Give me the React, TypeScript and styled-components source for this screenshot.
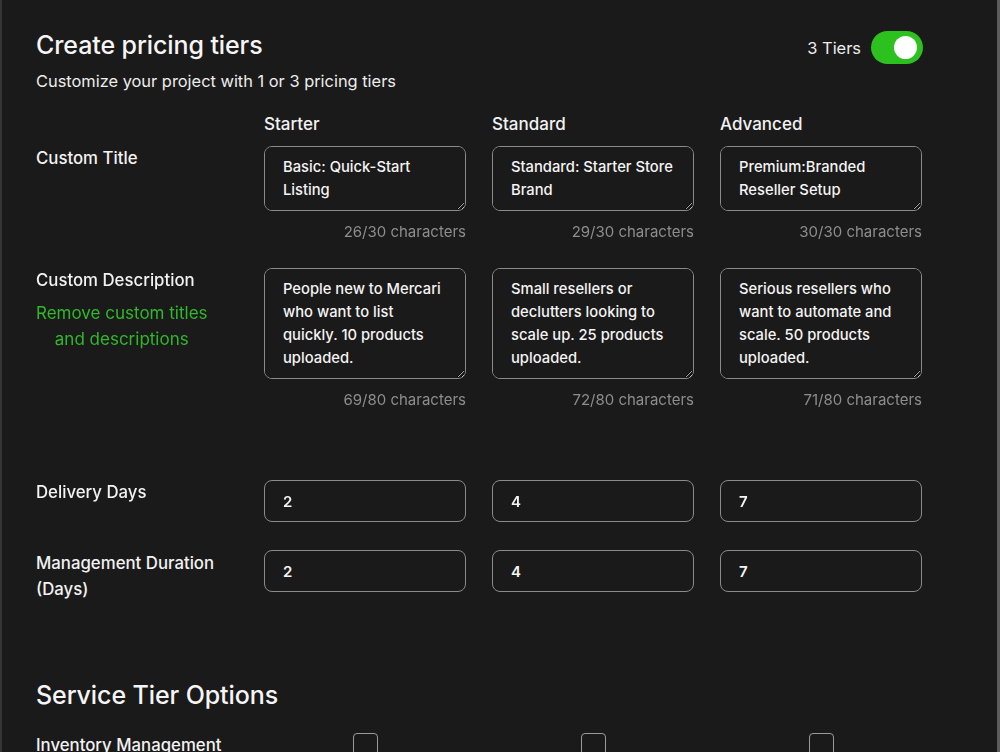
import React from "react";
import styled, { createGlobalStyle } from "styled-components";

const GlobalStyle = createGlobalStyle`
  html, body { margin: 0; padding: 0; background: #1b1a1a; }
  body { font-family: Inter, "Noto Sans", sans-serif; color: #f2f2f2; }
  * { box-sizing: border-box; }
`;

const Panel = styled.div`
  width: 1000px;
  min-height: 752px;
  height: 752px;
  overflow: hidden;
  background: #1b1a1a;
  border-left: 2px solid #363535;
  border-right: 3px solid #5c5c5c;
  padding: 29px 0 0 34px;
`;

const Header = styled.div`
  display: flex;
  justify-content: space-between;
  align-items: flex-start;
  width: 887px;
`;

const TitleBlock = styled.div`
  display: flex;
  flex-direction: column;
  gap: 8px;
`;

const Title = styled.h1`
  margin: 0;
  font-size: 25px;
  line-height: 32px;
  font-weight: 500;
  letter-spacing: -0.1px;
  color: #f5f5f5;
`;

const Subtitle = styled.p`
  margin: 0;
  font-size: 16.4px;
  line-height: 24px;
  font-weight: 400;
  color: #ededed;
`;

const ToggleWrap = styled.div`
  display: flex;
  align-items: center;
  gap: 10px;
  margin-top: 2px;
  font-size: 16.4px;
  color: #ededed;
`;

const Toggle = styled.div<{ $on: boolean }>`
  position: relative;
  width: 52px;
  height: 33px;
  border-radius: 17px;
  background: ${(p) => (p.$on ? "#2cc11f" : "#555")};
`;

const Knob = styled.span<{ $on: boolean }>`
  position: absolute;
  top: 5px;
  ${(p) => (p.$on ? "right: 6px;" : "left: 6px;")}
  width: 23px;
  height: 23px;
  border-radius: 50%;
  background: #ffffff;
`;

const Grid = styled.div<{ $top?: number; $align?: string }>`
  display: grid;
  grid-template-columns: repeat(4, 202px);
  column-gap: 26px;
  margin-top: ${(p) => p.$top ?? 0}px;
  align-items: ${(p) => p.$align ?? "start"};
`;

const ColHead = styled.div`
  font-size: 17px;
  line-height: 24px;
  font-weight: 500;
  color: #f2f2f2;
`;

const LabelCell = styled.div`
  display: flex;
  flex-direction: column;
  align-items: flex-start;
  gap: 8px;
`;

const Label = styled.div<{ $lh?: number }>`
  font-size: 16.8px;
  line-height: ${(p) => p.$lh ?? 24}px;
  font-weight: 500;
  color: #f2f2f2;
  white-space: nowrap;
`;

const GreenLink = styled.a`
  display: block;
  text-align: center;
  font-size: 17px;
  line-height: 26px;
  color: #2fb82a;
  text-decoration: none;
  white-space: nowrap;
  cursor: pointer;
`;

const FieldCell = styled.div`
  display: flex;
  flex-direction: column;
  gap: 11px;
`;

const TextArea = styled.textarea<{ $h: number }>`
  display: block;
  width: 202px;
  height: ${(p) => p.$h}px;
  padding: 9px 16px 9px 18px;
  border: 1px solid #8c8b8b;
  border-radius: 8px;
  background: #1b1a1a;
  color: #f4f4f4;
  font-family: Inter, "Noto Sans", sans-serif;
  font-size: 14.75px;
  font-weight: 500;
  line-height: 23px;
  resize: vertical;
  outline: none;
`;

const Count = styled.div`
  text-align: right;
  font-size: 15px;
  line-height: 20px;
  color: #8e8d8d;
`;

const Input = styled.input`
  display: block;
  width: 202px;
  height: 42px;
  padding: 0 18px;
  border: 1px solid #8c8b8b;
  border-radius: 8px;
  background: #1b1a1a;
  color: #f4f4f4;
  font-family: Inter, "Noto Sans", sans-serif;
  font-size: 15px;
  font-weight: 600;
  outline: none;
`;

const SectionTitle = styled.h2`
  margin: 77px 0 0;
  font-size: 25px;
  line-height: 32px;
  font-weight: 500;
  letter-spacing: -0.1px;
  color: #f5f5f5;
`;

const CheckCell = styled.div`
  display: flex;
  justify-content: center;
`;

const Check = styled.span`
  display: block;
  width: 25px;
  height: 25px;
  border: 1.5px solid #9a9a9a;
  border-radius: 4px;
`;

const tiers = [
  {
    name: "Starter",
    title: "Basic: Quick-Start Listing",
    titleCount: "26/30 characters",
    desc: "People new to Mercari who want to list quickly. 10 products uploaded.",
    descCount: "69/80 characters",
    delivery: "2",
    duration: "2",
  },
  {
    name: "Standard",
    title: "Standard: Starter Store Brand",
    titleCount: "29/30 characters",
    desc: "Small resellers or declutters looking to scale up. 25 products uploaded.",
    descCount: "72/80 characters",
    delivery: "4",
    duration: "4",
  },
  {
    name: "Advanced",
    title: "Premium:Branded Reseller Setup",
    titleCount: "30/30 characters",
    desc: "Serious resellers who want to automate and scale. 50 products uploaded.",
    descCount: "71/80 characters",
    delivery: "7",
    duration: "7",
  },
];

export default function App() {
  return (
    <>
      <GlobalStyle />
      <Panel>
        <Header>
          <TitleBlock>
            <Title>Create pricing tiers</Title>
            <Subtitle>Customize your project with 1 or 3 pricing tiers</Subtitle>
          </TitleBlock>
          <ToggleWrap>
            <span>3 Tiers</span>
            <Toggle $on>
              <Knob $on />
            </Toggle>
          </ToggleWrap>
        </Header>

        <Grid $top={19}>
          <div />
          {tiers.map((t) => (
            <ColHead key={t.name}>{t.name}</ColHead>
          ))}
        </Grid>

        <Grid $top={10}>
          <LabelCell>
            <Label>Custom Title</Label>
          </LabelCell>
          {tiers.map((t) => (
            <FieldCell key={t.name}>
              <TextArea $h={65} defaultValue={t.title} />
              <Count>{t.titleCount}</Count>
            </FieldCell>
          ))}
        </Grid>

        <Grid $top={26}>
          <LabelCell>
            <Label>Custom Description</Label>
            <GreenLink>
              Remove custom titles
              <br />
              and descriptions
            </GreenLink>
          </LabelCell>
          {tiers.map((t) => (
            <FieldCell key={t.name}>
              <TextArea $h={111} defaultValue={t.desc} />
              <Count>{t.descCount}</Count>
            </FieldCell>
          ))}
        </Grid>

        <Grid $top={70}>
          <Label>Delivery Days</Label>
          {tiers.map((t) => (
            <Input key={t.name} defaultValue={t.delivery} />
          ))}
        </Grid>

        <Grid $top={28}>
          <Label $lh={26}>
            Management Duration
            <br />
            (Days)
          </Label>
          {tiers.map((t) => (
            <Input key={t.name} defaultValue={t.duration} />
          ))}
        </Grid>

        <SectionTitle>Service Tier Options</SectionTitle>

        <Grid $top={22}>
          <Label>Inventory Management</Label>
          {tiers.map((t) => (
            <CheckCell key={t.name}>
              <Check />
            </CheckCell>
          ))}
        </Grid>
      </Panel>
    </>
  );
}
